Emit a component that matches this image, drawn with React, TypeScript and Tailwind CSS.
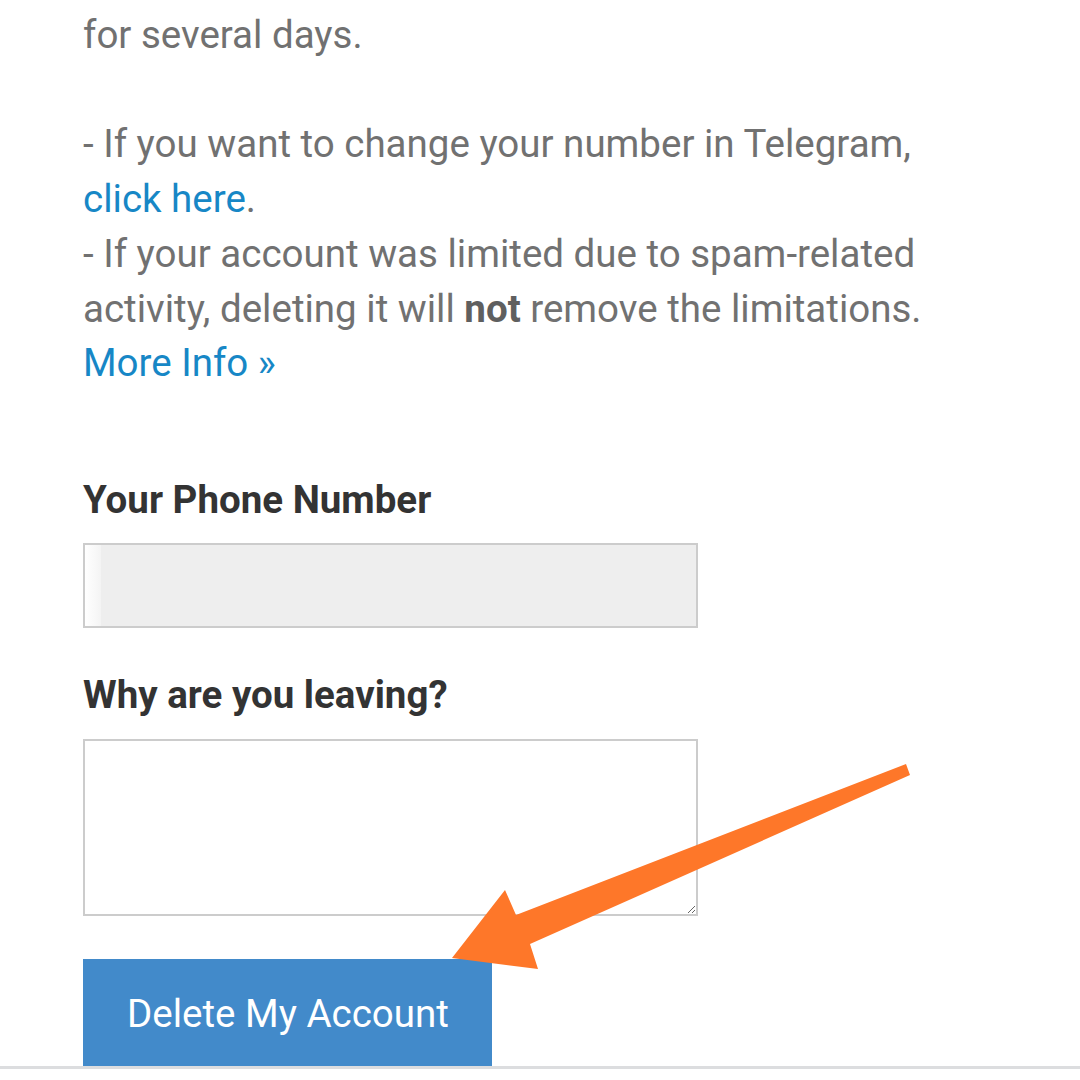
import React from 'react';

const Arrow: React.FC = () => (
    <svg
        className="absolute left-0 top-0 pointer-events-none"
        width="1080"
        height="1080"
        viewBox="0 0 1080 1080"
    >
        <polygon
            points="452,958 505,890 516,915 906,764 910,775 530,944 538,969"
            fill="#fe7729"
        />
    </svg>
);

const App: React.FC = () => {
    return (
        <div
            className="relative w-[1080px] h-[1080px] overflow-hidden bg-white"
            style={{ fontFamily: 'Roboto, "Noto Sans", sans-serif' }}
        >
            <div className="pl-[83px] pt-[8px]">
                {/* Notes */}
                <p className="text-[38.5px] leading-[54.7px] text-[#717171] whitespace-nowrap">
                    for several days.
                    <br />
                    <br />
                    - If you want to change your number in Telegram,
                    <br />
                    <a className="text-[#1787c6]">click here</a>.
                    <br />
                    - If your account was limited due to spam-related
                    <br />
                    activity, deleting it will <b className="font-bold text-[#5f5f5f]">not</b> remove the limitations.
                    <br />
                    <a className="text-[#1787c6]">More Info »</a>
                </p>

                {/* Form */}
                <form className="mt-[82px]">
                    <label className="block text-[38.5px] leading-[54px] font-bold text-[#333333]">
                        Your Phone Number
                    </label>
                    <div className="mt-[16px] flex w-[615px] h-[85px] border-2 border-[#cccccc] bg-[#eeeeee]">
                        <div className="w-[16px] h-full bg-gradient-to-r from-white to-[#f4f4f4]" />
                    </div>

                    <label className="mt-[40px] block text-[38.5px] leading-[54px] font-bold text-[#333333]">
                        Why are you leaving?
                    </label>
                    <textarea
                        className="mt-[17px] block w-[615px] h-[177px] border-2 border-[#cccccc] bg-white outline-none"
                    />

                    <button
                        type="button"
                        className="mt-[43px] block w-[409px] h-[107px] pl-[44px] pt-[4px] text-left bg-[#428aca] text-white text-[38.5px] leading-none"
                    >
                        Delete My Account
                    </button>
                </form>
            </div>
            <div className="h-[3px] w-full bg-[#dcdddf]" />
            <Arrow />
        </div>
    );
};

export default App;
